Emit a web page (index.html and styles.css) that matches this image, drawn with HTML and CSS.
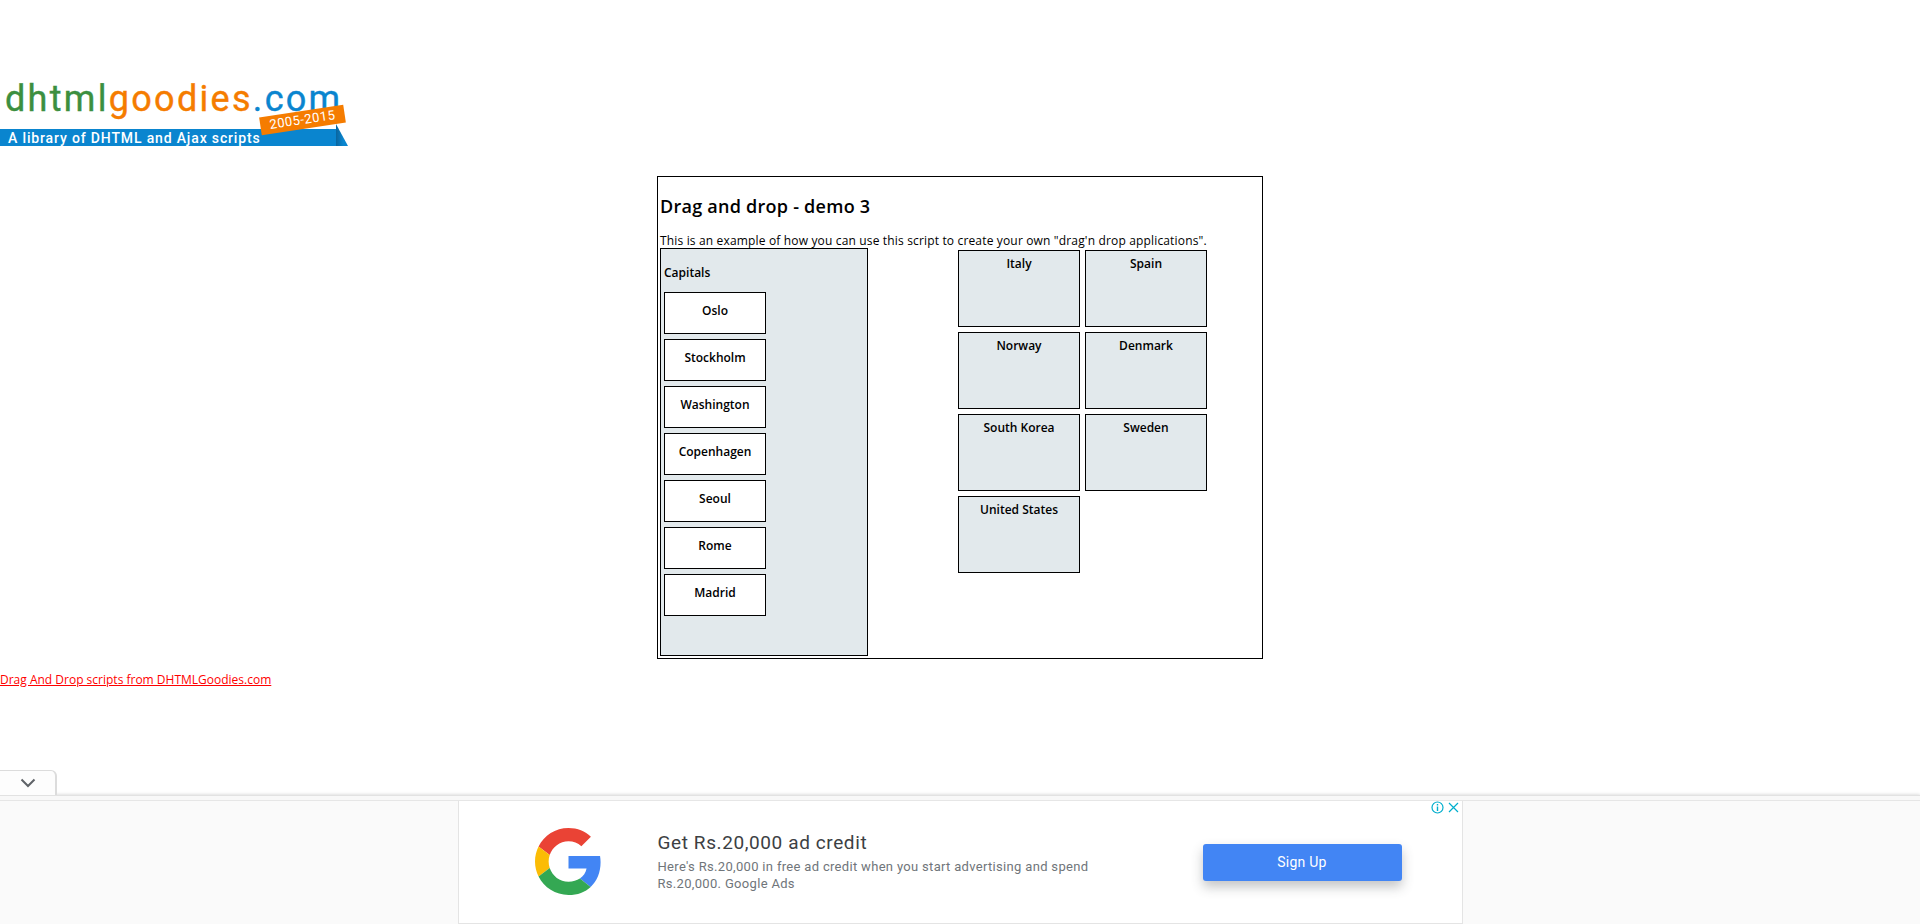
FILE: index.html
```html
<!DOCTYPE html>
<html lang="en">
<head>
  <meta charset="UTF-8">
  <meta name="viewport" content="width=device-width, initial-scale=1.0">
  <title>Drag and drop - demo 3</title>
  <link rel="stylesheet" href="styles.css">
</head>
<body>
  <!-- Site logo -->
  <div class="logo">
    <div class="logo-name"><span class="green">dhtml</span><span class="orange">goodies</span><span class="blue">.com</span></div>
    <div class="logo-band">A library of DHTML and Ajax scripts</div>
    <div class="logo-fold"></div>
    <div class="logo-years">2005-2015</div>
  </div>

  <!-- Demo -->
  <div class="main-container">
    <h1>Drag and drop - demo 3</h1>
    <p>This is an example of how you can use this script to create your own "drag'n drop applications".</p>
    <div class="drag-area">
      <div class="capitals">
        <div class="capitals-title">Capitals</div>
        <div class="capital">Oslo</div>
        <div class="capital">Stockholm</div>
        <div class="capital">Washington</div>
        <div class="capital">Copenhagen</div>
        <div class="capital">Seoul</div>
        <div class="capital">Rome</div>
        <div class="capital">Madrid</div>
      </div>
      <div class="countries">
        <div class="country">Italy</div>
        <div class="country">Spain</div>
        <div class="country">Norway</div>
        <div class="country">Denmark</div>
        <div class="country">South Korea</div>
        <div class="country">Sweden</div>
        <div class="country">United States</div>
      </div>
    </div>
  </div>

  <a class="site-link" href="#">Drag And Drop scripts from DHTMLGoodies.com</a>

  <!-- Anchor ad -->
  <div class="anchor-ad">
    <div class="ad-tab">
      <svg width="16" height="10" viewBox="0 0 16 10"><path d="M1.5 1.5 8 8l6.5-6.5" fill="none" stroke="#5f6368" stroke-width="2"/></svg>
    </div>
    <div class="ad-strip"></div>
    <div class="ad-body">
      <div class="ad-unit">
        <svg class="ad-g" viewBox="0 0 48 48">
          <path fill="#EA4335" d="M24 9.5c3.54 0 6.71 1.22 9.21 3.6l6.85-6.85C35.9 2.38 30.47 0 24 0 14.62 0 6.51 5.38 2.56 13.22l7.98 6.19C12.43 13.72 17.74 9.5 24 9.5z"/>
          <path fill="#4285F4" d="M46.98 24.55c0-1.57-.15-3.09-.38-4.55H24v9.02h12.94c-.58 2.96-2.26 5.48-4.78 7.18l7.73 6c4.51-4.18 7.09-10.36 7.09-17.65z"/>
          <path fill="#FBBC05" d="M10.53 28.59c-.48-1.45-.76-2.99-.76-4.59s.27-3.14.76-4.59l-7.98-6.19C.92 16.46 0 20.12 0 24c0 3.88.92 7.54 2.56 10.78l7.97-6.19z"/>
          <path fill="#34A853" d="M24 48c6.48 0 11.93-2.13 15.89-5.81l-7.73-6c-2.15 1.45-4.92 2.3-8.16 2.3-6.26 0-11.57-4.22-13.47-9.91l-7.98 6.19C6.51 42.62 14.62 48 24 48z"/>
        </svg>
        <div class="ad-copy">
          <div class="ad-title">Get Rs.20,000 ad credit</div>
          <div class="ad-desc">Here's Rs.20,000 in free ad credit when you start advertising and spend Rs.20,000. Google Ads</div>
        </div>
        <div class="ad-button">Sign Up</div>
        <div class="ad-icons">
          <svg width="13" height="13" viewBox="0 0 13 13"><circle cx="6.5" cy="6.5" r="5.5" fill="none" stroke="#00aecd" stroke-width="1.2"/><path d="M6.5 3v1.4M6.5 5.6V10" stroke="#00aecd" stroke-width="1.4"/></svg>
          <svg width="11" height="11" viewBox="0 0 11 11"><path d="M1 1l9 9M10 1l-9 9" stroke="#00aecd" stroke-width="1.2"/></svg>
        </div>
      </div>
    </div>
  </div>
</body>
</html>
```

FILE: styles.css
```css
/* General */
html, body {
  margin: 0;
  padding: 0;
}

body {
  font-family: "Open Sans", "Noto Sans", sans-serif;
  font-size: 12px;
  line-height: 16px;
  color: #000;
  background: #fff;
  height: 924px;
  overflow: hidden;
}

/* Logo */
.logo {
  position: relative;
  width: 350px;
  height: 64px;
  margin-top: 83px;
  font-family: Roboto, sans-serif;
}

.logo-name {
  height: 46px;
  padding-left: 5px;
  font-size: 36px;
  line-height: 32px;
  letter-spacing: 2.3px;
  -webkit-text-stroke: 0.4px;
}

.green { color: #3c8f3f; }
.orange { color: #f57c00; }
.blue { color: #0a85cf; }

.logo-band {
  width: 336px;
  height: 17px;
  padding-left: 8px;
  box-sizing: border-box;
  background: #0a85cf;
  color: #fff;
  font-size: 14px;
  font-weight: 500;
  line-height: 18px;
  letter-spacing: 0.85px;
}

.logo-years {
  position: absolute;
  left: 260px;
  top: 28px;
  width: 85px;
  height: 18px;
  background: #f57c00;
  color: #fff;
  font-size: 13px;
  line-height: 18px;
  letter-spacing: 0.5px;
  text-align: center;
  transform: rotate(-8.5deg);
}

.logo-fold {
  position: absolute;
  left: 336px;
  top: 41px;
  width: 12px;
  height: 22px;
  background: linear-gradient(to right, #0a659e, #0a85cf 60%);
  clip-path: polygon(0 0, 100% 100%, 0 100%);
}

/* Demo box */
.main-container {
  width: 600px;
  height: 477px;
  margin: 29px auto 0;
  padding: 2px;
  border: 1px solid #000;
}

h1 {
  margin: 16px 0 0;
  font-size: 18px;
  line-height: 22px;
  font-weight: 600;
  letter-spacing: 0.25px;
}

p {
  margin: 15px 0 0;
  padding-top: 1px;
  height: 15px;
  letter-spacing: 0.16px;
  white-space: nowrap;
}

.drag-area {
  display: flex;
}

.capitals {
  width: 200px;
  height: 400px;
  padding: 3px;
  border: 1px solid #000;
  background: #e2e9ec;
}

.capitals-title {
  height: 20px;
  margin: 13px 0 7px;
  font-weight: 600;
}

.capital {
  width: 100px;
  height: 40px;
  margin-bottom: 5px;
  border: 1px solid #000;
  background: #fff;
  text-align: center;
  font-weight: 600;
  line-height: 36px;
}

.countries {
  display: grid;
  grid-template-columns: 122px 122px;
  grid-auto-rows: 77px;
  gap: 5px 5px;
  align-content: start;
  margin: 2px 0 0 90px;
}

.country {
  border: 1px solid #000;
  background: #e2e9ec;
  text-align: center;
  font-weight: 600;
  line-height: 26px;
}

.site-link {
  display: block;
  margin-top: 13px;
  color: #f00;
}

/* Anchor ad */
.anchor-ad {
  position: fixed;
  left: 0;
  right: 0;
  bottom: 0;
}

.ad-tab {
  position: relative;
  z-index: 1;
  display: flex;
  align-items: center;
  justify-content: center;
  width: 57px;
  height: 25px;
  background: #fdfdfd;
  border-top: 1px solid #dcdcdc;
  border-right: 2px solid #dcdcdc;
  border-radius: 0 6px 0 0;
  box-sizing: border-box;
}

.ad-strip {
  height: 6px;
  box-sizing: border-box;
  background: #f8f8f8;
  border-top: 1px solid #e2e2e2;
  border-bottom: 1px solid #e6e6e6;
  box-shadow: 0 -1px 3px rgba(0, 0, 0, 0.12);
}

.ad-body {
  display: flex;
  justify-content: center;
  height: 123px;
  background: #fafafa;
}

.ad-unit {
  position: relative;
  display: flex;
  align-items: center;
  width: 1005px;
  box-sizing: border-box;
  background: #fff;
  border-left: 1px solid #e4e4e4;
  border-right: 1px solid #e4e4e4;
  border-bottom: 1px solid #e4e4e4;
  font-family: Roboto, "Liberation Sans", sans-serif;
}

.ad-g {
  width: 67px;
  height: 67px;
  margin: 0 0 1px 76px;
}

.ad-copy {
  width: 450px;
  margin: 0 0 2px 56px;
}

.ad-title {
  font-size: 19px;
  line-height: 24px;
  color: #3c4043;
  letter-spacing: 0.6px;
}

.ad-desc {
  margin-top: 3px;
  font-size: 13px;
  line-height: 17px;
  color: #70757a;
  letter-spacing: 0.32px;
}

.ad-button {
  width: 199px;
  height: 37px;
  margin-left: 95px;
  border-radius: 3px;
  background: #4285f4;
  color: #fff;
  font-size: 14px;
  line-height: 37px;
  letter-spacing: 0.25px;
  text-align: center;
  box-shadow: 0 6px 12px rgba(60, 64, 67, 0.3);
}

.ad-icons {
  position: absolute;
  top: 0;
  right: 3px;
  display: flex;
  align-items: center;
  gap: 4px;
}
```
